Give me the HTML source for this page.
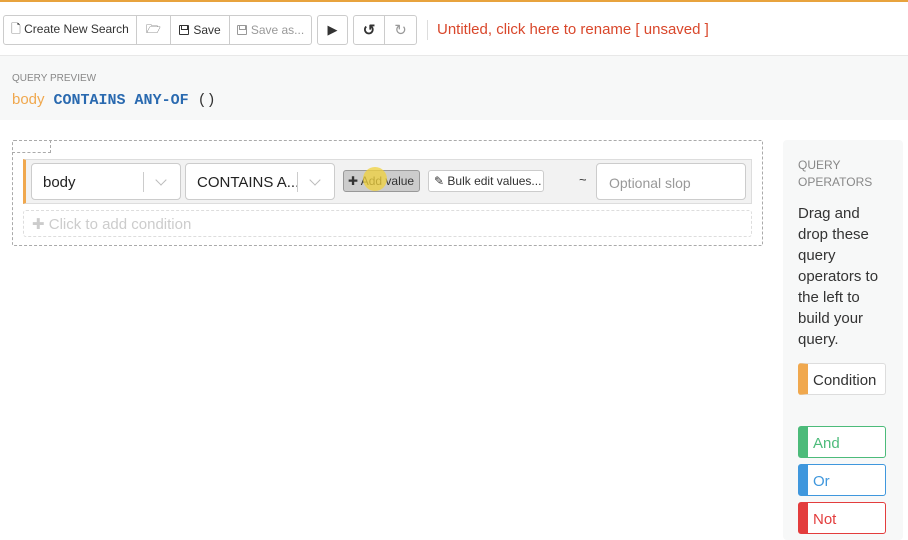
<!DOCTYPE html>
<html><head><style>
*{box-sizing:border-box}
body{margin:0;width:908px;height:537px;background:#fff;font-family:"Liberation Sans",sans-serif;position:relative;overflow:hidden;color:#333}
.a{position:absolute}
.btn{position:absolute;top:15px;height:30px;border:1px solid #ccc;background:#fff;font-size:12px;display:flex;align-items:center;justify-content:center;color:#333}
.fl{display:inline-block;width:10px;height:10px;border:1.5px solid currentColor;border-radius:1px;margin-right:4px;position:relative}
.fl:after{content:"";position:absolute;left:1px;top:0;width:5px;height:3px;border:1px solid currentColor;border-top:none}
.sel{position:absolute;top:163px;height:37px;border:1px solid #ccc;border-radius:4px;background:#fff;font-size:15px;display:flex;align-items:center;padding-left:11px;padding-top:2px;color:#222}
.chev{position:absolute;right:0;top:8px;width:37px;height:20px;border-left:1px solid #ccc}
.chev:after{content:"";position:absolute;left:13px;top:4px;width:7px;height:7px;border-right:1.5px solid #bbb;border-bottom:1.5px solid #bbb;transform:rotate(45deg)}
.op{position:absolute;left:798px;width:88px;height:32px;border:1px solid;border-left-width:10px;border-radius:3px;background:#fff;font-size:15px;padding-left:5px;line-height:33px}
</style></head><body>
<div class="a" style="left:0;top:0;width:908px;height:2px;background:#e8a33d"></div>
<div class="btn" style="left:3px;width:134px;border-radius:3px 0 0 3px">🗋&nbsp;Create New Search</div>
<div class="btn" style="left:136px;width:35px">🗁</div>
<div class="btn" style="left:170px;width:60px"><span class="fl"></span>Save</div>
<div class="btn" style="left:229px;width:83px;color:#999;border-radius:0 3px 3px 0"><span class="fl"></span>Save as...</div>
<div class="btn" style="left:317px;width:31px;border-radius:3px;font-size:13px">▶</div>
<div class="btn" style="left:353px;width:32px;border-radius:3px 0 0 3px;font-size:15px;font-weight:bold">↺</div>
<div class="btn" style="left:384px;width:33px;border-radius:0 3px 3px 0;color:#999;font-size:15px">↻</div>
<div class="a" style="left:427px;top:20px;width:1px;height:20px;background:#ddd"></div>
<div class="a" style="left:437px;top:21px;font-size:15px;color:#d9472b">Untitled, click here to rename [ unsaved ]</div>
<div class="a" style="left:0;top:55px;width:908px;height:65px;background:#f7f8f8;border-top:1px solid #e8e8e8"></div>
<div class="a" style="left:12px;top:73px;font-size:10px;color:#888">QUERY PREVIEW</div>
<div class="a" style="left:12px;top:91px;font-size:15px;font-family:'Liberation Mono',monospace"><span style="color:#f0a84e;font-family:'Liberation Sans'">body</span> <b style="color:#2a6ab0">CONTAINS ANY-OF</b> ()</div>
<div class="a" style="left:12px;top:140px;width:751px;height:106px;border:1px dashed #aaa;border-radius:2px"></div>
<div class="a" style="left:12px;top:140px;width:39px;height:13px;border:1px dashed #aaa;border-top:none;border-left:none"></div>
<div class="a" style="left:23px;top:159px;width:729px;height:45px;background:#f2f2f2;border:1px solid #ddd;border-left:3px solid #f0a84e"></div>
<div class="sel" style="left:31px;width:150px">body<div class="chev"></div></div>
<div class="sel" style="left:185px;width:150px">CONTAINS A...<div class="chev"></div></div>
<div class="a" style="left:343px;top:170px;width:77px;height:22px;background:#ccc;border:1px solid #999;border-radius:3px;font-size:12px;line-height:21px;padding-left:4px">✚ Add value</div>
<div class="a" style="left:363px;top:167px;width:24px;height:24px;border-radius:50%;background:rgba(240,210,60,.75)"></div>
<div class="a" style="left:428px;top:170px;width:116px;height:22px;background:#fff;border:1px solid #ccc;border-radius:3px;font-size:12px;line-height:21px;padding-left:5px">✎ Bulk edit values...</div>
<div class="a" style="left:579px;top:172px;font-size:13px">~</div>
<div class="a" style="left:596px;top:163px;width:150px;height:37px;border:1px solid #ccc;border-radius:4px;background:#fff;font-size:14px;color:#999;line-height:38px;padding-left:12px">Optional slop</div>
<div class="a" style="left:23px;top:210px;width:729px;height:27px;border:1px dashed #ddd;border-radius:3px;font-size:15px;color:#ccc;line-height:27px;padding-left:8px">✚ Click to add condition</div>
<div class="a" style="left:783px;top:140px;width:120px;height:400px;background:#f7f8f8;border-radius:4px"></div>
<div class="a" style="left:798px;top:157px;font-size:12px;color:#888;line-height:17px">QUERY<br>OPERATORS</div>
<div class="a" style="left:798px;top:203px;font-size:15px;line-height:21px;color:#333">Drag and<br>drop these<br>query<br>operators to<br>the left to<br>build your<br>query.</div>
<div class="op" style="top:363px;border-color:#ddd;border-left-color:#f0a84e;color:#333">Condition</div>
<div class="op" style="top:426px;border-color:#4cbb7a;color:#4cbb7a">And</div>
<div class="op" style="top:464px;border-color:#3f97dd;color:#3f97dd">Or</div>
<div class="op" style="top:502px;border-color:#e33d3d;color:#e33d3d">Not</div>
</body></html>
